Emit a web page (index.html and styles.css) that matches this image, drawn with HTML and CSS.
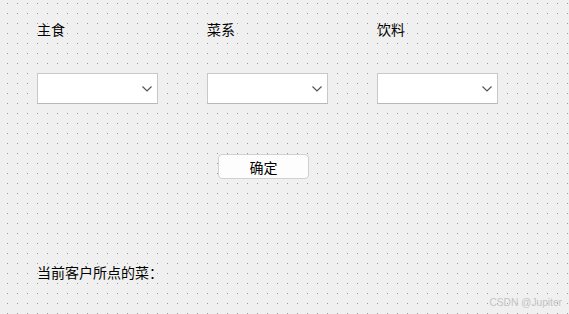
FILE: index.html
```html
<!DOCTYPE html>
<html>
<head>
<meta charset="utf-8">
	<title>点菜</title>
	<link rel="stylesheet" href="styles.css">
</head>
<body>

<div class="form">
	<div class="fields">
		<div class="field">
			<label class="label">主食</label>
			<div class="combo">
				<svg class="arrow" width="10" height="6" viewBox="0 0 10 6"><path d="M0.5 0.5 L5 5 L9.5 0.5" fill="none" stroke="#555" stroke-width="1.2"/></svg>
			</div>
		</div>
		<div class="field">
			<label class="label">菜系</label>
			<div class="combo">
				<svg class="arrow" width="10" height="6" viewBox="0 0 10 6"><path d="M0.5 0.5 L5 5 L9.5 0.5" fill="none" stroke="#555" stroke-width="1.2"/></svg>
			</div>
		</div>
		<div class="field">
			<label class="label">饮料</label>
			<div class="combo">
				<svg class="arrow" width="10" height="6" viewBox="0 0 10 6"><path d="M0.5 0.5 L5 5 L9.5 0.5" fill="none" stroke="#555" stroke-width="1.2"/></svg>
			</div>
		</div>
	</div>

	<div class="actions">
		<button class="btn">确定</button>
	</div>

	<div class="result">当前客户所点的菜：</div>
</div>

<div class="mark">CSDN @Jupiter</div>

</body>
</html>
```

FILE: styles.css
```css
html, body{
	margin: 0;
	height: 100%;
}
body{
	background-color: #f0f0f0;
	background-image:
		linear-gradient(to bottom, transparent 1px, #f0f0f0 1px),
		linear-gradient(to right, #9a9a9a 1px, #f0f0f0 1px);
	background-size: 10px 10px;
	background-position: 7px 3px;
	font-family: "Noto Sans CJK SC", "Noto Sans", sans-serif;
	font-size: 14px;
	color: #000;
	position: relative;
	overflow: hidden;
}
.form{
	padding: 19px 0 0 37px;
}
.fields{
	display: flex;
	gap: 49px;
}
.field{
	width: 121px;
}
.label{
	display: block;
	line-height: 20px;
	height: 20px;
	margin-bottom: 34px;
}
.combo{
	box-sizing: border-box;
	height: 31px;
	background: #fff;
	border: 1px solid #c8c8c8;
	border-bottom-color: #b8b8b8;
	border-radius: 1px;
	display: flex;
	align-items: center;
	justify-content: flex-end;
	padding-right: 5px;
}
.arrow{
	display: block;
}
.actions{
	padding: 50px 0 0 181px;
}
.btn{
	box-sizing: border-box;
	width: 91px;
	height: 25px;
	background: #fdfdfd;
	border: 1px solid #d0d0d0;
	border-radius: 4px;
	font-family: "Noto Sans CJK SC", "Noto Sans", sans-serif;
	font-size: 14px;
	color: #000;
	padding: 0;
	line-height: 22px;
	display: block;
}
.result{
	margin-top: 83px;
	line-height: 20px;
}
.mark{
	position: absolute;
	right: 7px;
	bottom: 6px;
	font-family: "Liberation Sans", Arial, sans-serif;
	font-size: 10.2px;
	color: #c4c4c4;
}
```
